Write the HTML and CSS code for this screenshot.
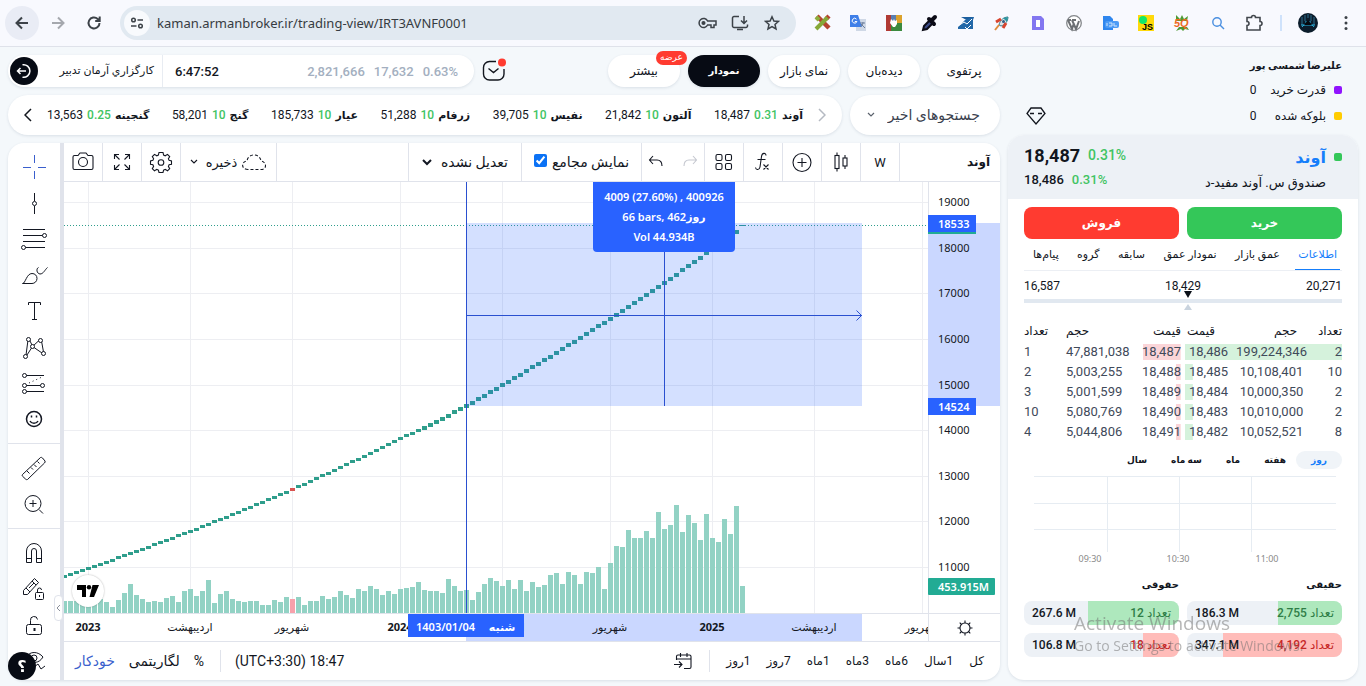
FILE: index.html
```html
<!DOCTYPE html>
<html lang="fa">
<head>
  <meta charset="UTF-8">
  <meta name="viewport" content="width=device-width, initial-scale=1.0">
  <title>آوند - کارگزاری آرمان تدبیر</title>
  <link rel="stylesheet" href="styles.css">
</head>
<body>
  <!-- browser bar -->
  <header class="browser">
    <button class="nav-btn nav-back" aria-label="Back"><svg width="16" height="16" viewBox="0 0 16 16"><path d="M14 8H3M8 2.500L2.500 8L8 13.500"/></svg></button>
    <button class="nav-btn nav-forward" aria-label="Forward"><svg width="16" height="16" viewBox="0 0 16 16"><path d="M2 8h11M8 2.500L13.500 8L8 13.500"/></svg></button>
    <button class="nav-btn" aria-label="Reload"><svg width="16" height="16" viewBox="0 0 16 16"><path d="M13.500 8a5.500 5.500 0 1 1-1.800-4.100L13.500 6M13.700 1.500V6H9.200"/></svg></button>
    <div class="address">
      <span class="site-info"><svg width="14" height="14" viewBox="0 0 14 14"><circle cx="3.500" cy="4" r="1.800"/><path d="M7.500 4H13M1 10h5.500"/><circle cx="10.500" cy="10" r="1.800"/></svg></span>
      <input class="url" type="text" aria-label="Address" value="kaman.armanbroker.ir/trading-view/IRT3AVNF0001">
      <button class="addr-btn" aria-label="Passwords"><svg width="20" height="16" viewBox="0 0 20 16"><path d="M9.600 6A4.500 4.500 0 1 0 9.600 10H13v2.500h3V10h2V6z"/><circle cx="5.500" cy="8" r="1.300" fill="#3c4248"/></svg></button>
      <button class="addr-btn" aria-label="Install"><svg width="18" height="16" viewBox="0 0 18 16"><path d="M8 1.500H3a1.500 1.500 0 0 0-1.500 1.500v8A1.500 1.500 0 0 0 3 12.500h12a1.500 1.500 0 0 0 1.500-1.500V9.500M6 14.500h6M13 1v7M10 5.500l3 3 3-3"/></svg></button>
      <button class="addr-btn" aria-label="Bookmark"><svg width="16" height="16" viewBox="0 0 16 16"><path d="M8 1.800l1.900 4.200 4.500.4-3.400 3 1 4.500L8 11.500l-4 2.400 1-4.500-3.400-3 4.500-.4z"/></svg></button>
    </div>
    <div class="extensions">
      <button aria-label="Pen"><svg width="18" height="18" viewBox="0 0 18 18"><path d="M4 2L16 14" stroke="#b5432f" stroke-width="4.500"/><path d="M16 2L13 5" stroke="#b5432f" stroke-width="4.500"/><path d="M14.500 3.500L3 15" stroke="#86a838" stroke-width="4"/><path d="M3 3l3 3" stroke="#8cae3c" stroke-width="4"/></svg></button>
      <button aria-label="Translate"><svg width="18" height="18" viewBox="0 0 18 18"><rect x="7" y="5" width="10" height="12" fill="#cfd8e6"/><path d="M1 1h8l4 12H1z" fill="#3f7fe8"/><path d="M7.500 5.200a2.400 2.400 0 1 0 .4 2.300H5.800" stroke="#fff" fill="none"/><path d="M11 9h5M14 8c0 3-2 4-3 5M12 10l4 4" stroke="#6d7f9c" fill="none"/></svg></button>
      <button aria-label="Picker"><svg width="18" height="18" viewBox="0 0 18 18"><rect x="1" y="1" width="16" height="16" fill="#5a7fb0"/><rect x="1" y="9" width="16" height="8" fill="#3b8a3e"/><path d="M1 1h5v16H1z" fill="#b13a34"/><path d="M11 1h6v8h-6z" fill="#dba22c"/><path d="M6 5l2 2 1-2 1 2 2-1v4l-2 3H8l-3-4z" fill="#fff"/></svg></button>
      <button aria-label="Eyedropper"><svg width="18" height="18" viewBox="0 0 18 18"><path d="M2 16l1-4 6-6 3 3-6 6z" fill="#3b4a86" stroke="#0b0b16" stroke-width="2"/><path d="M8 5l5 5M11 6l3-3" stroke="#0b0b16" stroke-width="4" stroke-linecap="round"/></svg></button>
      <button aria-label="Trend"><svg width="18" height="18" viewBox="0 0 18 18"><path d="M4 3h13l-2 6z" fill="#1c5e9e"/><path d="M1 13l7-7 8-3 0 12H1z" fill="#2368a8"/><path d="M1 12l6-4 3 2 5-5" stroke="#fff" fill="none"/><path d="M8 13l2 2 4-4" stroke="#fff" fill="none"/></svg></button>
      <button aria-label="Rocket"><svg width="18" height="18" viewBox="0 0 18 18"><path d="M15 3c-4 0-8 3-9 8l2 1c4-1 7-5 7-9z" fill="#dfe4e8" stroke="#3b7c8c"/><path d="M15 3l-5 1 4 4z" fill="#2c98a0"/><path d="M3 8l5-3M10 14l3-5" stroke="#d8452e" stroke-width="3"/><path d="M6 11l-4 5" stroke="#e08b3a" stroke-width="2"/><circle cx="10.500" cy="7.500" r="1.500" fill="#315f86"/></svg></button>
      <button aria-label="Downloader"><svg width="18" height="18" viewBox="0 0 18 18"><path d="M3 2h9l3 3v11H3z" fill="#8377f0"/><rect x="7" y="6" width="4" height="7" fill="#fff"/></svg></button>
      <button aria-label="WordPress"><svg width="18" height="18" viewBox="0 0 18 18"><circle cx="9" cy="9" r="7.300" fill="#fff" stroke="#83868a" stroke-width="1.300"/><path d="M3 6l4 9 2-6M7 6l4 9 3-8M3 6h3M7 6h4" stroke="#6d7074" stroke-width="2" fill="none"/></svg></button>
      <button aria-label="Files"><svg width="18" height="18" viewBox="0 0 18 18"><path d="M2 2h7l3 3v11H2z" fill="#2f86ee"/><rect x="4" y="7" width="14" height="7" rx="2" fill="#4c9bf5"/><path d="M6 9v3M8 9h3v3H8M13 9v3h3" stroke="#cfe4fc" fill="none"/></svg></button>
      <button aria-label="JavaScript"><svg width="18" height="18" viewBox="0 0 18 18"><rect x="1" y="1" width="16" height="16" fill="#ffd90a"/><circle cx="6" cy="6" r="4" fill="#12e86b"/><text class="js-mark" x="5" y="16">JS</text></svg></button>
      <button aria-label="SQ"><svg width="18" height="18" viewBox="0 0 18 18"><path d="M3 1l4 4 2-4 2 4 4-3-1 5H3zM3 17l3-4h8l2 3-4-1-2 2-2-2z" fill="#4f9a34"/><text class="sq-mark" x="1" y="13">5Q</text></svg></button>
      <button aria-label="Search"><svg width="18" height="18" viewBox="0 0 18 18" fill="none" stroke="#4a8fe0" stroke-width="1.400"><circle cx="8" cy="8" r="4.200"/><path d="M11 11l4 4"/></svg></button>
      <button aria-label="Extensions"><svg width="18" height="18" viewBox="0 0 18 18" fill="none" stroke="#42474d" stroke-width="1.600"><path d="M2 3.500h4.500a2 2 0 0 1 4 0H15V7.500a2 2 0 0 1 0 4v4.500H2v-4.500a2 2 0 0 0 0-4z"/></svg></button>
    </div>
    <span class="browser-sep"></span>
    <button class="avatar" aria-label="Profile"><svg width="20" height="20" viewBox="0 0 20 20"><circle cx="10" cy="10" r="10" fill="#0b1c2b"/><path d="M4 4v8M7 2v6M13 2v6M16 4v8M10 1v4" stroke="#2c6c8c"/><path d="M4 14c2-4 10-4 12 0M7 9h6M3 12h14" stroke="#2bb3e0" fill="none"/><path d="M6 12l4-5 4 5z" fill="#05090f"/></svg></button>
    <button class="kebab" aria-label="Menu"><svg width="4" height="16" viewBox="0 0 4 16"><circle cx="2" cy="2.500" r="1.500"/><circle cx="2" cy="8" r="1.500"/><circle cx="2" cy="13.500" r="1.500"/></svg></button>
  </header>

  <div class="page">
    <main class="main">
      <div class="top-row">
        <div class="account-pill">
          <button class="logout" aria-label="خروج"><svg width="16" height="16" viewBox="0 0 16 16"><path d="M6.500 1.800a6.300 6.300 0 1 1 0 12.400M10 8H1.500M4.500 5L1.500 8l3 3"/></svg></button>
          <span class="broker fa">کارگزاري آرمان تدبیر</span>
          <span class="clock">6:47:52</span>
          <span class="index-values"><span>2,821,666</span><span>17,632</span><span>0.63%</span></span>
        </div>
        <button class="inbox" aria-label="پیام‌ها"><svg width="24" height="24" viewBox="0 0 24 24"><path d="M14 2.500H7.500a6 6 0 0 0-6 6V15a6 6 0 0 0 6 6H16a6 6 0 0 0 6-6V10M6.500 9.500l5 4 5-4"/><circle cx="20" cy="3.500" r="4" class="inbox-dot"/></svg></button>
        <nav class="main-nav" dir="rtl">
          <a href="#" class="nav-pill">پرتفوی</a>
          <a href="#" class="nav-pill">دیده‌بان</a>
          <a href="#" class="nav-pill">نمای بازار</a>
          <a href="#" class="nav-pill active">نمودار</a>
          <a href="#" class="nav-pill">بیشتر<span class="badge">عرضه</span></a>
        </nav>
      </div>

      <div class="ticker-row">
        <div class="ticker">
          <button class="ticker-arrow" aria-label="قبلی"><svg width="8" height="14" viewBox="0 0 8 14"><path d="M7 1L1 7l6 6"/></svg></button>
          <div class="tick-list">
            <a href="#" class="tick"><span>13,563</span><i>0.25</i><b class="fa">گنجینه</b></a>
            <a href="#" class="tick"><span>58,201</span><i>10</i><b class="fa">گنج</b></a>
            <a href="#" class="tick"><span>185,733</span><i>10</i><b class="fa">عیار</b></a>
            <a href="#" class="tick"><span>51,288</span><i>10</i><b class="fa">زرفام</b></a>
            <a href="#" class="tick"><span>39,705</span><i>10</i><b class="fa">نفیس</b></a>
            <a href="#" class="tick"><span>21,842</span><i>10</i><b class="fa">آلتون</b></a>
            <a href="#" class="tick"><span>18,487</span><i>0.31</i><b class="fa">آوند</b></a>
          </div>
          <button class="ticker-arrow dim" aria-label="بعدی"><svg width="8" height="14" viewBox="0 0 8 14"><path d="M1 1l6 6-6 6"/></svg></button>
        </div>
        <div class="recent">
          <svg width="8" height="6" viewBox="0 0 8 6"><path d="M1 1l3 3 3-3"/></svg>
          <select class="fa" dir="rtl" aria-label="جستجوهای اخیر"><option>جستجوهای اخیر</option></select>
        </div>
      </div>

      <section class="chart-panel">
        <div class="tools">
          <div class="tool-group">
            <button class="tool selected" aria-label="نشانگر"><svg width="28" height="28" viewBox="0 0 28 28"><path d="M14.500 2v8M14.500 18v8M3 14.500h8M18 14.500h8"/></svg></button>
            <button class="tool" aria-label="خط"><svg width="28" height="28" viewBox="0 0 28 28"><path d="M14.500 4v8M14.500 17v8"/><circle cx="14.500" cy="14.500" r="2"/></svg></button>
            <button class="tool" aria-label="فیبوناچی"><svg width="28" height="28" viewBox="0 0 28 28"><path d="M3 4.500h22M3 10.500h19.500M3 16.500h22M5.500 22.500H25"/><circle cx="24.500" cy="10.500" r="2"/><circle cx="3.500" cy="22.500" r="2"/></svg></button>
            <button class="tool" aria-label="قلم"><svg width="28" height="28" viewBox="0 0 28 28"><path d="M2.500 22.500c3 0 4-10 9.500-10 3 0 5 2 5 5 0 3-2.500 5-5 5zM18.500 6.500c-2.500 1-2 6 1.500 6.500 3.500 0 5-4.500 7.500-6.500"/></svg></button>
            <button class="tool" aria-label="متن"><svg width="28" height="28" viewBox="0 0 28 28"><path d="M8.500 8V5.500h12V8M14.500 5.500v17M12 22.500h5"/></svg></button>
            <button class="tool" aria-label="الگو"><svg width="28" height="28" viewBox="0 0 28 28"><path d="M6 22L8 7M9.500 7l3 6M7 22l5.500-8.500L19.500 7M21.500 8l2 11M14 14.500l8 5.500"/><g class="knob"><circle cx="5.500" cy="23.500" r="2"/><circle cx="8.500" cy="6.500" r="2"/><circle cx="12.500" cy="13.500" r="2"/><circle cx="20.500" cy="7.500" r="2"/><circle cx="23.500" cy="20.500" r="2"/></g></svg></button>
            <button class="tool" aria-label="پیش‌بینی"><svg width="28" height="28" viewBox="0 0 28 28"><path d="M6.500 6.500H24M6.500 16.500h14M6.500 22.500H24"/><path d="M9 14l13-6" stroke-dasharray="1 3"/><circle cx="4.500" cy="6.500" r="2"/><circle cx="4.500" cy="16.500" r="2"/><circle cx="22.500" cy="16.500" r="2"/><circle cx="4.500" cy="22.500" r="2"/></svg></button>
            <button class="tool" aria-label="شکلک"><svg width="28" height="28" viewBox="0 0 28 28"><circle cx="14" cy="14" r="7.500" stroke-width="1.500"/><path d="M10 16c1.500 3 6.500 3 8 0M11.500 10.500v2M16.500 10.500v2" stroke-width="1.500"/></svg></button>
          </div>
          <div class="tool-group">
            <button class="tool" aria-label="خط‌کش"><svg width="28" height="28" viewBox="0 0 28 28"><path d="M2.500 20.500l18-17q1-.5 2 .5l2.500 3q.5 1-.5 2l-17 16.500q-1 .5-2-.5l-3-2.800q-.7-1 0-1.700zM7 17l2.500 2.500M11 13.500l2 2M14 10.500l2.500 2.500M17.500 7.500l2 2"/></svg></button>
            <button class="tool" aria-label="بزرگ‌نمایی"><svg width="28" height="28" viewBox="0 0 28 28"><circle cx="13" cy="13.500" r="8"/><path d="M13 10v7M9.500 13.500h7M19 19.500l4 4"/></svg></button>
          </div>
          <div class="tool-group">
            <button class="tool" aria-label="آهنربا"><svg width="28" height="28" viewBox="0 0 28 28"><path d="M6.500 23.500V12a7.500 7.500 0 0 1 15 0v11.500h-5V12a2.500 2.500 0 0 0-5 0v11.500zM6.500 19.500h5M16.500 19.500h5"/></svg></button>
            <button class="tool" aria-label="ماندن در حالت رسم"><svg width="28" height="28" viewBox="0 0 28 28"><path d="M3.500 19.500v-4l11-12 4 4-11 12zM6 13l4 4M12 6l4 4M9 13l5-5"/><rect x="15.500" y="17.500" width="8" height="7" rx="1"/><path d="M17.500 17.500V15a2 2 0 0 1 4 0M19.500 20v2"/></svg></button>
            <button class="tool" aria-label="قفل"><svg width="28" height="28" viewBox="0 0 28 28"><rect x="6.500" y="13.500" width="15" height="10" rx="2"/><path d="M10.500 13.500V9.500a3.500 3.500 0 0 1 7-1"/><path d="M14.500 17v3" stroke-width="2"/></svg></button>
            <button class="tool" aria-label="پنهان کردن"><svg width="28" height="28" viewBox="0 0 28 28"><path d="M6 10c4-6 12-6 17 0-4 7-12 7-16 1M14 20l4-3 3 5 4-3"/><circle cx="14" cy="11" r="3"/></svg></button>
          </div>
        </div>
        <button class="tools-toggle" aria-label="بستن نوار ابزار"><svg width="5" height="8" viewBox="0 0 5 8"><path d="M4 1L1 4l3 3"/></svg></button>

        <div class="chart-body">
          <div class="toolbar">
            <button class="cell" aria-label="عکس"><svg width="24" height="24" viewBox="0 0 24 24"><path d="M3.500 5.500H7l2-2.500h6l2 2.500h3.500a1.500 1.500 0 0 1 1.500 1.500v11a1.500 1.500 0 0 1-1.500 1.500h-17A1.500 1.500 0 0 1 2 18V7a1.500 1.500 0 0 1 1.500-1.500z"/><circle cx="12" cy="12" r="4.500"/></svg></button>
            <button class="cell" aria-label="تمام صفحه"><svg width="24" height="24" viewBox="0 0 24 24"><path d="M4.500 9V4.500H9M4.500 4.500L9.500 9.500M15 4.500h4.500V9M19.500 4.500l-5 5M4.500 15v4.500H9M4.500 19.500l5-5M19.500 15v4.500H15M19.500 19.500l-5-5"/></svg></button>
            <button class="cell" aria-label="تنظیمات"><svg width="24" height="24" viewBox="0 0 24 24"><path d="M10 2.500h4l.6 2.600 1.600.7L18.500 4.400l2.200 2.200-1.300 2.200.7 1.600 2.400.6v3.200l-2.400.6-.7 1.600 1.300 2.200-2.200 2.200-2.300-1.400-1.600.7-.6 2.400h-4l-.6-2.400-1.600-.7-2.300 1.400-2.200-2.200 1.300-2.200-.7-1.600-2.400-.6V11l2.400-.6.7-1.600-1.300-2.200 2.200-2.200 2.300 1.400 1.600-.7z"/><circle cx="12" cy="12.500" r="2.800"/></svg></button>
            <button class="cell save"><svg width="8" height="6" viewBox="0 0 8 6"><path d="M1 1l3 3 3-3"/></svg><span class="fa">ذخیره</span><svg width="26" height="18" viewBox="0 0 26 18"><path d="M7 16.500c-7 0-7-8-1-8.500 1-8 13-8 14 0 6 1 6 8.500 0 8.500z" stroke-dasharray="3 2"/></svg></button>
            <div class="cell spacer"></div>
            <div class="cell adjust"><svg width="10" height="8" viewBox="0 0 10 8"><path d="M1 2l4 4 4-4" stroke-width="2"/></svg><select class="fa" dir="rtl" aria-label="تعدیل"><option>تعدیل نشده</option></select></div>
            <label class="cell meetings" for="meetings"><input type="checkbox" id="meetings" checked><span class="fa">نمایش مجامع</span></label>
            <div class="cell undo-redo">
              <button aria-label="واگرد"><svg width="16" height="14" viewBox="0 0 16 14"><path d="M5 1L1.500 5 5 9M1.500 5H9c3.500 0 5 2.500 5 6"/></svg></button>
              <button class="off" aria-label="ازنو"><svg width="16" height="14" viewBox="0 0 16 14"><path d="M11 1l3.500 4L11 9M14.500 5H7c-3.500 0-5 2.500-5 6"/></svg></button>
            </div>
            <button class="cell" aria-label="الگوها"><svg width="24" height="24" viewBox="0 0 24 24"><rect x="4" y="4.500" width="6" height="6" rx="1.500"/><rect x="13.500" y="4.500" width="6" height="6" rx="1.500"/><rect x="4" y="13.500" width="6" height="6" rx="1.500"/><rect x="13.500" y="13.500" width="6" height="6" rx="1.500"/></svg></button>
            <button class="cell" aria-label="اندیکاتورها"><svg width="24" height="24" viewBox="0 0 24 24"><path d="M15 5.500c0-3-4-3-4.500 1L9 17c-.5 3-4 3.500-4.500.5M6.500 9.500h8M12.500 14.500l5 5M17.500 14.500l-5 5"/></svg></button>
            <button class="cell" aria-label="مقایسه"><svg width="24" height="24" viewBox="0 0 24 24"><circle cx="12" cy="12.500" r="9"/><path d="M12 8v9M7.500 12.500h9"/></svg></button>
            <button class="cell" aria-label="نوع نمودار"><svg width="24" height="24" viewBox="0 0 24 24"><path d="M8 2.500v3M8 18.500v3M16 5v3M16 16v3"/><rect x="6" y="5.500" width="4" height="13"/><rect x="14" y="8" width="4" height="8"/></svg></button>
            <button class="cell">W</button>
            <button class="cell symbol"><b class="fa">آوند</b></button>
          </div>

          <div class="chart-grid">
            <div class="plot">
              <svg id="plot" class="plot-svg"></svg>
              <div class="tv-logo"><svg width="22" height="12" viewBox="0 0 22 12"><path d="M0 0h9v12H5V5H0zM15.500 0H22l-5 12h-4.500z"/><circle cx="12" cy="2.200" r="2.200"/></svg></div>
              <div class="measure">4009 (27.60%) , 400926<br>66 bars, 462روز<br>Vol 44.934B</div>
            </div>
            <div class="price-scale"><svg id="prices" class="plot-svg"></svg></div>
            <div class="time-scale"><svg id="times" class="plot-svg"></svg></div>
            <button class="axis-settings" aria-label="تنظیمات محور"><svg width="18" height="18" viewBox="0 0 18 18"><circle cx="9" cy="9" r="5"/><path d="M9 1.500V4M9 14v2.500M1.500 9H4M14 9h2.500M3.700 3.700l1.800 1.800M12.500 12.500l1.800 1.800M3.700 14.300l1.800-1.800M12.500 5.500l1.800-1.800"/></svg></button>
          </div>

          <div class="bottom-bar">
            <button class="fa auto">خودکار</button>
            <button class="fa">لگاریتمی</button>
            <button class="percent">%</button>
            <span class="bar-sep"></span>
            <button class="utc">(UTC+3:30) 18:47</button>
            <div class="ranges">
              <button aria-label="برو به تاریخ"><svg width="20" height="18" viewBox="0 0 20 18"><path d="M3.500 8V4.500a1.500 1.500 0 0 1 1.500-1.500h11.500a1.500 1.500 0 0 1 1.500 1.500V15a1.500 1.500 0 0 1-1.500 1.500H11M3.500 7h14.500M7.500 1v4M14 1v4M1 12.500h8M6 9.500l3 3-3 3"/></svg></button>
              <span class="bar-sep"></span>
              <button class="fa" dir="rtl">1روز</button>
              <button class="fa" dir="rtl">7روز</button>
              <button class="fa" dir="rtl">1ماه</button>
              <button class="fa" dir="rtl">3ماه</button>
              <button class="fa" dir="rtl">6ماه</button>
              <button class="fa" dir="rtl">1سال</button>
              <button class="fa" dir="rtl">کل</button>
            </div>
          </div>
        </div>
      </section>
    </main>

    <aside class="side">
      <div class="user">
        <svg class="diamond" width="20" height="18" viewBox="0 0 20 18"><path d="M5 1h10l4 5.500-9 10.500L1 6.500zM4 6.500h4M12 6.500h4"/></svg>
        <div class="user-info" dir="rtl">
          <div class="user-name">علیرضا شمسی پور</div>
          <div class="balance"><span class="dot purple"></span><span class="label">قدرت خرید</span><span class="amount">0</span></div>
          <div class="balance"><span class="dot yellow"></span><span class="label">بلوکه شده</span><span class="amount">0</span></div>
        </div>
      </div>

      <section class="stock">
        <div class="stock-head">
          <div>
            <div class="last"><b>18,487</b><span class="up">0.31%</span></div>
            <div class="close"><span>18,486</span><span class="up">0.31%</span></div>
          </div>
          <div class="stock-title" dir="rtl">
            <div class="stock-symbol"><span class="dot green"></span><b>آوند</b></div>
            <div class="stock-name">صندوق س. آوند مفید-د</div>
          </div>
        </div>

        <div class="stock-body">
          <div class="pair trade">
            <button class="sell">فروش</button>
            <button class="buy">خرید</button>
          </div>

          <nav class="tabs fa" dir="rtl">
            <a href="#" class="active">اطلاعات</a>
            <a href="#">عمق بازار</a>
            <a href="#">نمودار عمق</a>
            <a href="#">سابقه</a>
            <a href="#">گروه</a>
            <a href="#">پیام‌ها</a>
          </nav>

          <div class="range">
            <div class="range-labels"><span>16,587</span><span>18,429</span><span>20,271</span></div>
            <div class="range-bar"><svg class="range-mark" width="10" height="22" viewBox="0 0 10 22"><path d="M1 1h8L5 8z" fill="#0b1018"/><path d="M1 20h8L5 14z" fill="#c9d3de"/></svg></div>
          </div>

          <div class="pair book">
            <table class="asks">
              <thead><tr><th>تعداد</th><th>حجم</th><th>قیمت</th></tr></thead>
              <tbody>
                <tr style="background-size: 24% 100%"><td>1</td><td>47,881,038</td><td>18,487</td></tr>
                <tr style="background-size: 3% 100%"><td>2</td><td>5,003,255</td><td>18,488</td></tr>
                <tr style="background-size: 3% 100%"><td>3</td><td>5,001,599</td><td>18,489</td></tr>
                <tr style="background-size: 3% 100%"><td>10</td><td>5,080,769</td><td>18,490</td></tr>
                <tr style="background-size: 3% 100%"><td>4</td><td>5,044,806</td><td>18,491</td></tr>
              </tbody>
            </table>
            <table class="bids">
              <thead><tr><th>قیمت</th><th>حجم</th><th>تعداد</th></tr></thead>
              <tbody>
                <tr style="background-size: 100% 100%"><td>18,486</td><td>199,224,346</td><td>2</td></tr>
                <tr style="background-size: 5% 100%"><td>18,485</td><td>10,108,401</td><td>10</td></tr>
                <tr style="background-size: 5% 100%"><td>18,484</td><td>10,000,350</td><td>2</td></tr>
                <tr style="background-size: 5% 100%"><td>18,483</td><td>10,010,000</td><td>2</td></tr>
                <tr style="background-size: 5% 100%"><td>18,482</td><td>10,052,521</td><td>8</td></tr>
              </tbody>
            </table>
          </div>

          <div class="periods" dir="rtl">
            <button class="active">روز</button>
            <button>هفته</button>
            <button>ماه</button>
            <button>سه ماه</button>
            <button>سال</button>
          </div>

          <svg class="mini" viewBox="0 0 318 92">
            <path d="M10 3.500h302M10 30.500h302M10 56.500h302M83.500 3v76M155.500 3v76M227.500 3v76"/>
            <text x="66" y="89">09:30</text><text x="154" y="89">10:30</text><text x="243" y="89">11:00</text>
          </svg>

          <div class="pair holders">
            <div>
              <h3>حقوقی</h3>
              <div class="meter buy-meter"><span class="fill" style="width: 59%"></span><b>267.6 M</b><span class="count" dir="rtl">تعداد 12</span></div>
              <div class="meter sell-meter"><span class="fill" style="width: 23%"></span><b>106.8 M</b><span class="count" dir="rtl">تعداد 18</span></div>
            </div>
            <div>
              <h3>حقیقی</h3>
              <div class="meter buy-meter"><span class="fill" style="width: 41%"></span><b>186.3 M</b><span class="count" dir="rtl">تعداد 2,755</span></div>
              <div class="meter sell-meter"><span class="fill" style="width: 77%"></span><b>347.1 M</b><span class="count" dir="rtl">تعداد 4,192</span></div>
            </div>
          </div>
        </div>
      </section>
    </aside>
  </div>

  <button class="help" aria-label="راهنما">؟</button>
  <div class="watermark"><p class="wm-title">Activate Windows</p><p>Go to Settings to activate Windows.</p></div>

  <script src="script.js"></script>
</body>
</html>
```

FILE: styles.css
```css
* {
  box-sizing: border-box;
}

body {
  margin: 0;
  min-height: 100vh;
  display: flex;
  flex-direction: column;
  background-color: #f4f8fb;
  color: #12161e;
  font-family: Roboto, "DejaVu Sans", sans-serif;
  font-size: 12px;
}

button, select, input {
  font: inherit;
  color: inherit;
  border: none;
  background: none;
  padding: 0;
  margin: 0;
}

button {
  cursor: pointer;
  display: flex;
  align-items: center;
  justify-content: center;
}

a {
  color: inherit;
  text-decoration: none;
}

svg {
  flex: none;
}

.fa {
  font-size: 11px;
}

/* browser bar */
.browser {
  height: 47px;
  flex: none;
  display: flex;
  align-items: center;
  padding: 0 16px 0 5px;
  background-color: #f8f9fe;
  border-bottom: 1px solid #dfe2ea;
}

.nav-btn {
  width: 34px;
  height: 34px;
  margin-right: 2px;
  border-radius: 50%;
}

.nav-btn svg {
  fill: none;
  stroke: #3c4248;
  stroke-width: 2;
}

.nav-back {
  background-color: #e9ecf5;
}

.nav-forward svg {
  stroke: #a5a8ae;
}

.address {
  flex: 1;
  height: 34px;
  margin: 0 8px 0 7px;
  padding: 0 8px 0 4px;
  display: flex;
  align-items: center;
  border-radius: 17px;
  background-color: #e1e9f1;
}

.site-info {
  width: 26px;
  height: 26px;
  display: flex;
  align-items: center;
  justify-content: center;
  border-radius: 50%;
  background-color: #f8fafd;
}

.site-info svg,
.addr-btn svg {
  fill: none;
  stroke: #3c4248;
  stroke-width: 1.5;
}

.url {
  flex: 1;
  margin-left: 7px;
  color: #363b41;
  font-family: "Noto Sans", sans-serif;
  font-size: 13px;
}

.addr-btn {
  width: 32px;
  height: 32px;
}

.extensions {
  display: flex;
}

.extensions button {
  width: 36px;
  height: 36px;
}

.js-mark {
  font: bold 9px "Liberation Sans", sans-serif;
}

.sq-mark {
  font: italic bold 11px "Liberation Sans", sans-serif;
  fill: #ee6a1e;
}

.browser-sep {
  width: 2px;
  height: 16px;
  margin: 0 16px 0 8px;
  background-color: #cfe2fb;
}

.avatar {
  margin-right: 24px;
}

.kebab {
  width: 8px;
}

.kebab svg {
  fill: #3c4248;
}

/* page layout */
.page {
  flex: 1;
  display: grid;
  grid-template-columns: minmax(0, 1fr) 350px;
  gap: 8px;
  padding: 8px 8px 6px;
}

.main {
  display: flex;
  flex-direction: column;
  gap: 8px;
}

.top-row,
.ticker-row {
  display: flex;
  gap: 8px;
}

.account-pill {
  width: 466px;
  height: 32px;
  padding: 0 16px 0 2px;
  display: flex;
  align-items: center;
  border-radius: 16px;
  background-color: #fff;
  box-shadow: 0 1px 3px rgba(30, 60, 90, 0.12);
}

.logout {
  width: 28px;
  height: 28px;
  border-radius: 50%;
  background-color: #070b14;
}

.logout svg {
  fill: none;
  stroke: #fff;
  stroke-width: 1.5;
}

.broker {
  width: 125px;
  height: 32px;
  padding-right: 8px;
  line-height: 32px;
  text-align: right;
  white-space: nowrap;
  border-right: 1px solid #e8ecf2;
}

.clock {
  margin-left: 12px;
  font-size: 13px;
  font-weight: 500;
}

.index-values {
  margin-left: auto;
  display: flex;
  gap: 9px;
  color: #a3afc0;
  font-size: 13px;
  font-weight: 500;
}

.inbox svg {
  fill: none;
  stroke: #12161e;
  stroke-width: 1.4;
  overflow: visible;
}

.inbox .inbox-dot {
  fill: #ff3b30;
  stroke: none;
}

.main-nav {
  margin-left: auto;
  display: flex;
  gap: 8px;
}

.nav-pill {
  position: relative;
  width: 72px;
  height: 32px;
  line-height: 32px;
  text-align: center;
  border-radius: 16px;
  background-color: #fff;
  box-shadow: 0 1px 3px rgba(30, 60, 90, 0.12);
}

.nav-pill.active {
  background-color: #070b14;
  color: #fff;
  font-size: 10px;
  font-weight: bold;
}

.badge {
  position: absolute;
  top: -4px;
  right: -7px;
  width: 31px;
  height: 14px;
  line-height: 13px;
  border-radius: 7px;
  background-color: #ff3b30;
  color: #fff;
  font-size: 9px;
}

.ticker {
  flex: 1;
  height: 40px;
  padding: 0 16px;
  display: flex;
  align-items: center;
  border-radius: 20px;
  background-color: #fff;
  box-shadow: 0 1px 3px rgba(30, 60, 90, 0.12);
}

.tick-list {
  flex: 1;
  margin: 0 15px;
  display: flex;
  justify-content: space-between;
}

.ticker-arrow svg,
.recent svg {
  fill: none;
  stroke: #12161e;
  stroke-width: 1.5;
}

.dim svg {
  stroke: #b5bac2;
}

.tick {
  display: flex;
  align-items: center;
  gap: 4px;
}

.tick i {
  font-style: normal;
  font-weight: 500;
  color: #41c463;
}

.recent {
  width: 150px;
  height: 40px;
  padding: 0 20px 0 17px;
  display: flex;
  align-items: center;
  justify-content: space-between;
  border-radius: 20px;
  background-color: #fff;
  box-shadow: 0 1px 3px rgba(30, 60, 90, 0.12);
}

.recent svg {
  stroke: #5a616c;
  stroke-width: 1.2;
}

.recent .fa {
  font-size: 14px;
}

select {
  appearance: none;
  color: #3a414e;
}

/* chart */
.chart-panel {
  position: relative;
  flex: 1;
  display: flex;
  overflow: hidden;
  border-radius: 16px;
  background-color: #fff;
  box-shadow: 0 1px 3px rgba(30, 60, 90, 0.12);
}

.tools {
  width: 56px;
  border-right: 4px solid #e0e3eb;
}

.tool-group {
  padding: 6px 0;
  border-bottom: 1px solid #e0e3eb;
}

.tool-group:last-child {
  padding-bottom: 0;
  border-bottom: none;
}

.tool {
  width: 52px;
  height: 36px;
}

.tool svg {
  fill: none;
  stroke: #131722;
}

.tool .knob {
  fill: #fff;
}

.tool.selected svg {
  stroke: #3a5fcd;
}

.tools-toggle {
  position: absolute;
  left: 46px;
  bottom: 59px;
  width: 9px;
  height: 26px;
  border: 1px solid #e0e3eb;
  border-radius: 4px;
  background-color: #fff;
}

.tools-toggle svg {
  fill: none;
  stroke: #8a8f9a;
}

.chart-body {
  flex: 1;
  min-width: 0;
  display: flex;
  flex-direction: column;
}

.toolbar {
  height: 39px;
  display: flex;
  border-bottom: 1px solid #e0e3eb;
}

.cell {
  width: 39px;
  display: flex;
  align-items: center;
  justify-content: center;
  border-right: 1px solid #e0e3eb;
  font-size: 13px;
}

.cell svg,
.axis-settings svg,
.bottom-bar svg {
  fill: none;
  stroke: #131722;
  stroke-width: 1.1;
}

.cell.save {
  width: 96px;
  gap: 8px;
}

.cell.save .fa {
  font-size: 13px;
}

.save svg:last-child {
  margin-left: -4px;
}

.cell.spacer {
  flex: 1;
}

.cell.adjust {
  width: 113px;
  gap: 8px;
}

.cell.adjust .fa,
.cell.meetings .fa {
  font-size: 14px;
}

.adjust select {
  color: #131722;
}

.cell.meetings {
  width: 120px;
  gap: 5px;
}

.meetings input {
  width: 13px;
  height: 13px;
  margin-bottom: 4px;
  accent-color: #0b72f5;
}

.cell.undo-redo {
  width: 63px;
  gap: 18px;
}

.undo-redo .off svg {
  stroke: #c5c8d0;
}

.cell.symbol {
  width: 100px;
  padding-right: 10px;
  justify-content: flex-end;
  border-right: none;
}

.cell.symbol .fa {
  font-size: 12px;
}

.chart-grid {
  flex: 1;
  display: grid;
  grid-template-columns: minmax(0, 1fr) 72px;
  grid-template-rows: minmax(0, 1fr) 28px;
}

.plot {
  position: relative;
  overflow: hidden;
}

.plot-svg {
  display: block;
  width: 100%;
  height: 100%;
}

.price-scale {
  box-shadow: inset 1px 0 #e0e3eb;
}

.time-scale,
.axis-settings {
  border-top: 1px solid #e0e3eb;
}

.axis-settings {
  border-left: 1px solid #e0e3eb;
}

.grid-line {
  stroke: #edeef2;
}

.candle {
  fill: #2f9e8c;
}

.candle.down {
  fill: #d9534f;
}

.volume {
  fill: #92d2c4;
}

.volume.down {
  fill: #f7a1ab;
}

.measure-area {
  fill: rgba(41, 98, 255, 0.2);
}

.axis-area {
  fill: #cad7ff;
}

.measure-line {
  fill: none;
  stroke: #2a50d0;
}

.last-line {
  stroke: #2f9e8c;
  stroke-dasharray: 1 2;
}

.axis-text {
  font-family: "Noto Sans", "DejaVu Sans", sans-serif;
  font-size: 11px;
  fill: #131722;
}

.axis-text.bold {
  font-weight: bold;
}

.axis-tag {
  fill: #2962ff;
}

.axis-tag.green {
  fill: #22ab94;
}

.axis-text.on-tag {
  fill: #fff;
  font-weight: 600;
}

.tv-logo {
  position: absolute;
  left: 8px;
  bottom: 6px;
  width: 32px;
  height: 32px;
  display: flex;
  align-items: center;
  justify-content: center;
  border-radius: 50%;
  background-color: #fff;
  box-shadow: 0 0 2px rgba(0, 0, 0, 0.3);
}

.measure {
  position: absolute;
  left: 529px;
  top: 0;
  width: 142px;
  height: 70px;
  padding-top: 5px;
  border-radius: 0 0 4px 4px;
  background-color: #2962ff;
  color: #fff;
  font-family: "Noto Sans", "DejaVu Sans", sans-serif;
  font-size: 11px;
  font-weight: 600;
  line-height: 20px;
  text-align: center;
}

.bottom-bar {
  height: 39px;
  padding: 0 16px 0 11px;
  display: flex;
  align-items: center;
  gap: 14px;
  border-top: 1px solid #e0e3eb;
}

.bottom-bar button {
  font-size: 14px;
  white-space: nowrap;
}

.bottom-bar .auto {
  color: #3a5fcd;
}

.bar-sep {
  width: 1px;
  height: 22px;
  margin-left: 2px;
  background-color: #e0e3eb;
}

.ranges {
  margin-left: auto;
  display: flex;
  align-items: center;
  gap: 16px;
}

.ranges button {
  font-size: 12px;
}

.ranges .bar-sep {
  margin: 0;
}

/* sidebar */
.side {
  display: flex;
  flex-direction: column;
}

.user {
  height: 80px;
  padding: 0 16px;
  display: flex;
  justify-content: space-between;
}

.diamond {
  margin: 52px 0 0 2px;
  fill: none;
  stroke: #12161e;
  stroke-width: 1.3;
}

.user-info {
  display: flex;
  flex-direction: column;
}

.user-name {
  height: 22px;
  line-height: 22px;
  font-size: 10px;
  font-weight: bold;
}

.balance {
  height: 26px;
  display: flex;
  align-items: center;
}

.balance .dot {
  margin-left: 8px;
}

.amount {
  margin-right: auto;
}

.dot {
  width: 8px;
  height: 8px;
  border-radius: 2px;
}

.purple {
  background-color: #9013fe;
}

.yellow {
  background-color: #ffcc00;
}

.green {
  background-color: #34c759;
}

.stock {
  flex: 1;
  overflow: hidden;
  border-radius: 16px;
  background-color: #fff;
  box-shadow: 0 1px 3px rgba(30, 60, 90, 0.12);
}

.stock-head {
  height: 64px;
  padding: 8px 16px 0;
  display: flex;
  justify-content: space-between;
  background-color: #edf1f6;
}

.last,
.close {
  display: flex;
  align-items: center;
  gap: 8px;
}

.last {
  height: 24px;
  font-size: 14px;
}

.last b {
  font-size: 18px;
}

.close {
  height: 24px;
  font-size: 13px;
  font-weight: 500;
}

.up {
  color: #41c463;
  font-weight: 500;
}

.stock-symbol {
  height: 28px;
  display: flex;
  align-items: center;
  gap: 8px;
}

.stock-symbol b {
  color: #157efb;
  font-size: 16px;
}

.stock-name {
  height: 24px;
  line-height: 24px;
  padding-right: 16px;
  font-size: 13px;
}

.stock-body {
  padding: 8px 16px 22px;
}

.pair {
  display: grid;
  grid-template-columns: 1fr 1fr;
  gap: 8px;
}

.trade button {
  height: 32px;
  border-radius: 8px;
  color: #fff;
  font-size: 12px;
  font-weight: bold;
}

.sell {
  background-color: #ff3b30;
}

.buy {
  background-color: #34c759;
}

.tabs {
  height: 32px;
  display: flex;
  justify-content: space-between;
  padding: 0 2px 0 6px;
  border-bottom: 1px solid #eceff4;
  line-height: 31px;
}

.tabs a {
  padding: 0 3px;
}

.tabs .active {
  color: #157efb;
  border-bottom: 1px solid #157efb;
}

.range-labels {
  height: 28px;
  line-height: 30px;
  display: flex;
  justify-content: space-between;
}

.range-bar {
  position: relative;
  height: 4px;
  background-color: #e1e8f0;
}

.range-mark {
  position: absolute;
  left: 50%;
  top: -9px;
}

.book {
  margin-top: 15px;
  gap: 4px;
}

.book table {
  width: 100%;
  border-spacing: 0 4px;
  table-layout: fixed;
}

.book th {
  height: 18px;
  padding: 0;
  line-height: 18px;
  font-weight: normal;
  text-align: left;
}

.book td {
  height: 16px;
  padding: 0;
  line-height: 16px;
  font-size: 13px;
  color: #3f4a5a;
  white-space: nowrap;
}

.book tbody tr {
  background-repeat: no-repeat;
}

.asks tbody tr {
  background-image: linear-gradient(#fbd5d8, #fbd5d8);
  background-position: right;
}

.bids tbody tr {
  background-image: linear-gradient(#d5f2dc, #d5f2dc);
  background-position: left;
}

.asks th:first-child {
  width: 42px;
}

.asks th:last-child {
  width: 44px;
}

.asks th:last-child,
.asks td:last-child,
.bids th:last-child,
.bids td:last-child {
  text-align: right;
}

.bids th:first-child {
  width: 48px;
}

.bids td:first-child {
  padding-left: 4px;
}

.bids th:first-child {
  padding-left: 2px;
}

.bids th:last-child {
  width: 32px;
}

.bids th:nth-child(2),
.bids td:nth-child(2) {
  text-align: center;
}

.bids th:nth-child(2) {
  padding-left: 28px;
}

.periods {
  height: 18px;
  margin-top: 7px;
  display: flex;
  align-items: center;
  gap: 24px;
}

.periods button {
  font-size: 9px;
  font-weight: bold;
}

.periods .active {
  width: 46px;
  height: 18px;
  margin-left: -14px;
  border-radius: 9px;
  background-color: #f0f4f8;
  color: #157efb;
}

.mini {
  display: block;
  width: 100%;
  margin-top: 4px;
}

.mini path {
  stroke: #e6ecf2;
  fill: none;
}

.mini text {
  font-family: "Noto Sans", sans-serif;
  font-size: 9px;
  text-anchor: middle;
  fill: #8a8a8a;
}

.holders h3 {
  height: 36px;
  margin: 0;
  padding-top: 10px;
  line-height: 20px;
  text-align: right;
  font-size: 10px;
}

.meter {
  position: relative;
  height: 24px;
  padding: 0 8px;
  display: flex;
  align-items: center;
  justify-content: space-between;
  overflow: hidden;
  border-radius: 8px;
  background-color: #edf1f6;
}

.meter + .meter {
  margin-top: 8px;
}

.meter b,
.count {
  position: relative;
  font-weight: 500;
}

.fill {
  position: absolute;
  top: 0;
  right: 0;
  height: 100%;
}

.buy-meter .fill {
  background-color: #aee8bd;
}

.sell-meter .fill {
  background-color: #ffbcb9;
}

.buy-meter .count {
  color: #2e7d46;
}

.sell-meter .count {
  color: #c62828;
}

/* floating */
.help {
  position: fixed;
  left: 8px;
  bottom: 6px;
  width: 28px;
  height: 28px;
  border-radius: 50%;
  background-color: #070b14;
  color: #fff;
  font-size: 16px;
  font-weight: bold;
}

.watermark {
  position: fixed;
  right: 58px;
  bottom: 30px;
  width: 234px;
  color: rgba(110, 110, 110, 0.5);
  font-family: "Open Sans", sans-serif;
  font-size: 14px;
  line-height: 20px;
  white-space: nowrap;
  pointer-events: none;
}

.watermark p {
  margin: 0;
}

.watermark .wm-title {
  font-size: 19px;
  line-height: 26px;
}
```

FILE: script.js
```js
const NS = "http://www.w3.org/2000/svg";
const plot = document.getElementById("plot");
const prices = document.getElementById("prices");
const times = document.getElementById("times");
const STEP = 6;
const BASE = 431;

function add(parent, tag, cls, attrs, text) {
  const el = document.createElementNS(NS, tag);
  el.setAttribute("class", cls);
  for (const key in attrs) el.setAttribute(key, attrs[key]);
  if (text) el.textContent = text;
  parent.appendChild(el);
}

function priceY(p) {
  return 385 - (p - 11000) * 0.0456;
}

// weekly volume, one value per bar
const volume = [
  12, 12, 12, 13, 14, 15, 14, 11, 6, 13, 20, 29, 18, 14, 11, 12, 11, 15, 17, 11,
  22, 24, 17, 22, 33, 10, 19, 22, 14, 12, 11, 12, 12, 8, 8, 13, 11, 16, 14, 16,
  8, 12, 12, 17, 14, 16, 22, 18, 15, 24, 22, 27, 24, 18, 22, 19, 24, 25, 26, 31,
  23, 22, 22, 20, 34, 27, 22, 23, 13, 21, 29, 35, 32, 27, 33, 24, 33, 22, 31, 26,
  28, 38, 40, 29, 41, 38, 29, 41, 40, 46, 24, 50, 67, 66, 83, 75, 75, 82, 75, 101,
  84, 88, 108, 81, 98, 90, 73, 99, 75, 71, 94, 79, 107, 27
];

// known prices (x, price), the rest is interpolated
const anchors = [[0, 10780], [24, 10956], [126, 11768], [228, 12688], [402, 14524], [600, 17230], [675, 18400], [681, 18487]];

function priceAt(x) {
  let i = 0;
  while (i < anchors.length - 2 && x > anchors[i + 1][0]) i++;
  const [x0, p0] = anchors[i];
  const [x1, p1] = anchors[i + 1];
  return p0 * Math.pow(p1 / p0, (x - x0) / (x1 - x0));
}

const months = [
  [24, "2023", true], [126, "اردیبهشت"], [228, "شهریور"], [336, "2024", true], [438, "اردیبهشت"],
  [546, "شهریور"], [648, "2025", true], [750, "اردیبهشت"], [858, "شهریور"]
];

// grid
for (const [x] of months) add(plot, "path", "grid-line", { d: `M${x + 0.5} 0V${BASE}` });
for (let p = 11000; p <= 19000; p += 1000) {
  const y = Math.round(priceY(p));
  add(plot, "path", "grid-line", { d: `M0 ${y + 0.5}H2000` });
}

// bars
volume.forEach((v, i) => {
  const down = i === 38 ? " down" : "";
  const x = i * STEP - 2;
  add(plot, "rect", "volume" + down, { x, y: BASE - v, width: 5, height: v });
  if (i < 113) {
    const y = Math.round(priceY(priceAt(x + 2)));
    const h = i < 60 ? 3 : 4;
    add(plot, "rect", "candle" + down, { x, y: y - 2, width: 5, height: h });
  }
});
add(plot, "rect", "candle", { x: 676, y: 43, width: 5, height: 1 });

add(plot, "path", "last-line", { d: "M0 43.5H2000" });

// measure range
add(plot, "rect", "measure-area", { x: 402, y: 41, width: 396, height: 183 });
add(plot, "path", "measure-line", { d: "M402.5 0V431M402 133.500H798M792.500 128.500L797.500 133.500L792.500 138.500M600.500 60V224" });

// price scale
add(prices, "rect", "axis-area", { x: 0, y: 41, width: 72, height: 183 });
for (let p = 11000; p <= 19000; p += 1000) add(prices, "text", "axis-text", { x: 10, y: Math.round(priceY(p)) + 4 }, String(p));
add(prices, "rect", "axis-tag green", { x: 0, y: 36, width: 48, height: 16 });
add(prices, "rect", "axis-tag", { x: 0, y: 33, width: 48, height: 17 });
add(prices, "text", "axis-text on-tag", { x: 10, y: 46 }, "18533");
add(prices, "rect", "axis-tag", { x: 0, y: 216, width: 48, height: 17 });
add(prices, "text", "axis-text on-tag", { x: 10, y: 229 }, "14524");
add(prices, "rect", "axis-tag green", { x: 0, y: 396, width: 67, height: 17, rx: 1 });
add(prices, "text", "axis-text on-tag", { x: 10, y: 409 }, "453.915M");

// time scale
add(times, "rect", "axis-area", { x: 402, y: 0, width: 396, height: 28 });
for (const [x, label, bold] of months) {
  add(times, "text", "axis-text" + (bold ? " bold" : ""), { x, y: 17, "text-anchor": "middle" }, label);
}
add(times, "rect", "axis-tag", { x: 344, y: 0, width: 116, height: 23 });
add(times, "text", "axis-text on-tag", { x: 352, y: 17 }, "1403/01/04");
add(times, "text", "axis-text on-tag", { x: 438, y: 17, "text-anchor": "middle" }, "شنبه");
```
